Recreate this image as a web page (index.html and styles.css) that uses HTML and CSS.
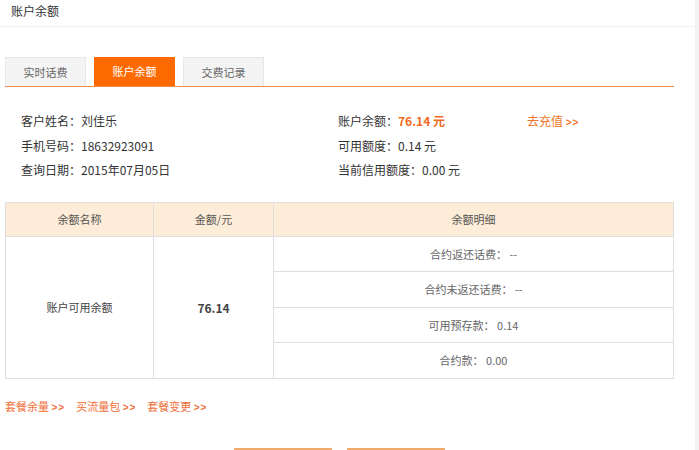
FILE: index.html
```html
<!DOCTYPE html>
<html lang="zh-CN">
<head>
<meta charset="utf-8">
<title>账户余额</title>
<link rel="stylesheet" href="styles.css">
</head>
<body>
<div class="page">
  <div class="main">
    <div class="header">账户余额</div>
    <div class="content">
      <div class="tabs">
        <div class="tab">实时话费</div>
        <div class="tab active">账户余额</div>
        <div class="tab">交费记录</div>
      </div>
      <div class="info">
        <div class="cell">客户姓名：刘佳乐</div>
        <div class="cell">账户余额：<span class="amount">76.14 元</span></div>
        <div class="cell"><a class="recharge">去充值 <b>&gt;&gt;</b></a></div>
        <div class="cell">手机号码：18632923091</div>
        <div class="cell">可用额度：0.14 元</div>
        <div class="cell"></div>
        <div class="cell">查询日期：2015年07月05日</div>
        <div class="cell">当前信用额度：0.00 元</div>
        <div class="cell"></div>
      </div>
      <table class="balance">
        <thead>
          <tr>
            <th class="c1">余额名称</th>
            <th class="c2">金额/元</th>
            <th class="c3">余额明细</th>
          </tr>
        </thead>
        <tbody>
          <tr>
            <td rowspan="4" class="name">账户可用余额</td>
            <td rowspan="4" class="money">76.14</td>
            <td class="detail">合约返还话费： --</td>
          </tr>
          <tr><td class="detail">合约未返还话费： --</td></tr>
          <tr><td class="detail">可用预存款： 0.14</td></tr>
          <tr><td class="detail">合约款： 0.00</td></tr>
        </tbody>
      </table>
      <div class="links">
        <a>套餐余量 <b>&gt;&gt;</b></a>
        <a>买流量包 <b>&gt;&gt;</b></a>
        <a>套餐变更 <b>&gt;&gt;</b></a>
      </div>
      <div class="buttons">
        <div class="btn"></div>
        <div class="btn"></div>
      </div>
    </div>
  </div>
  <div class="strip"></div>
</div>
</body>
</html>
```
FILE: styles.css
```css
html, body {
  margin: 0;
  padding: 0;
  background: #fff;
  overflow: hidden;
}
body {
  font-family: "Noto Sans CJK SC", "Noto Sans", "Liberation Sans", sans-serif;
  color: #333;
}
.page {
  display: flex;
  width: 699px;
  height: 450px;
  overflow: hidden;
}
.main {
  width: 695px;
}
.strip {
  width: 4px;
  background: #f3f3f3;
}
.header {
  height: 26px;
  line-height: 22px;
  padding-left: 11px;
  font-size: 12px;
  color: #333;
  border-bottom: 1px solid #f1f1f1;
}
.content {
  width: 669px;
  padding: 0 5px;
}
.tabs {
  display: flex;
  gap: 8px;
  margin-top: 30px;
  height: 29px;
  border-bottom: 1px solid #ef8c4c;
}
.tab {
  width: 79px;
  height: 28px;
  line-height: 29px;
  text-align: center;
  font-size: 11px;
  color: #666;
  background: #f4f4f4;
  border: 1px solid #e7e7e7;
  border-bottom: none;
}
.tab.active {
  width: 81px;
  border: none;
  height: 29px;
  background: #ff6a00;
  color: #fff;
}
.info {
  display: grid;
  grid-template-columns: 317px 189px 1fr;
  grid-auto-rows: 24.5px;
  padding: 22px 0 0 16px;
  font-size: 12px;
  line-height: 24.5px;
  color: #333;
}
.cell {
  height: 24.5px;
  overflow: visible;
  white-space: nowrap;
}
.amount {
  color: #f26b1d;
  font-weight: bold;
}
.recharge {
  color: #f0752a;
}
.recharge b, .links b {
  font-size: 10px;
  font-family: "Liberation Sans", sans-serif;
  font-weight: bold;
  letter-spacing: 1px;
}
.balance {
  margin-top: 19px;
  width: 669px;
  border-collapse: collapse;
  font-size: 11px;
  color: #555;
  table-layout: fixed;
}
.balance th, .balance td {
  border: 1px solid #dedede;
  text-align: center;
  padding: 0;
}
.balance th {
  background: #fdecd7;
  height: 33px;
  font-weight: normal;
  color: #555;
}
.balance th.c1 { width: 147px; }
.balance th.c2 { width: 119px; }
.balance td.detail {
  height: 34.5px;
  color: #666;
}
.balance td.name { color: #444; }
.balance td.money {
  font-weight: bold;
  font-size: 12px;
  color: #444;
}
.links {
  margin-top: 19px;
  display: flex;
  gap: 11px;
  font-size: 11px;
  line-height: 16px;
}
.links a {
  color: #f0703a;
}
.buttons {
  margin-top: 32px;
  display: flex;
  justify-content: center;
  gap: 15px;
}
.btn {
  width: 96px;
  height: 28px;
  border: 1px solid #f2b37c;
  border-top: 2px solid #f0aa6c;
  background: #fff6ee;
}
```
